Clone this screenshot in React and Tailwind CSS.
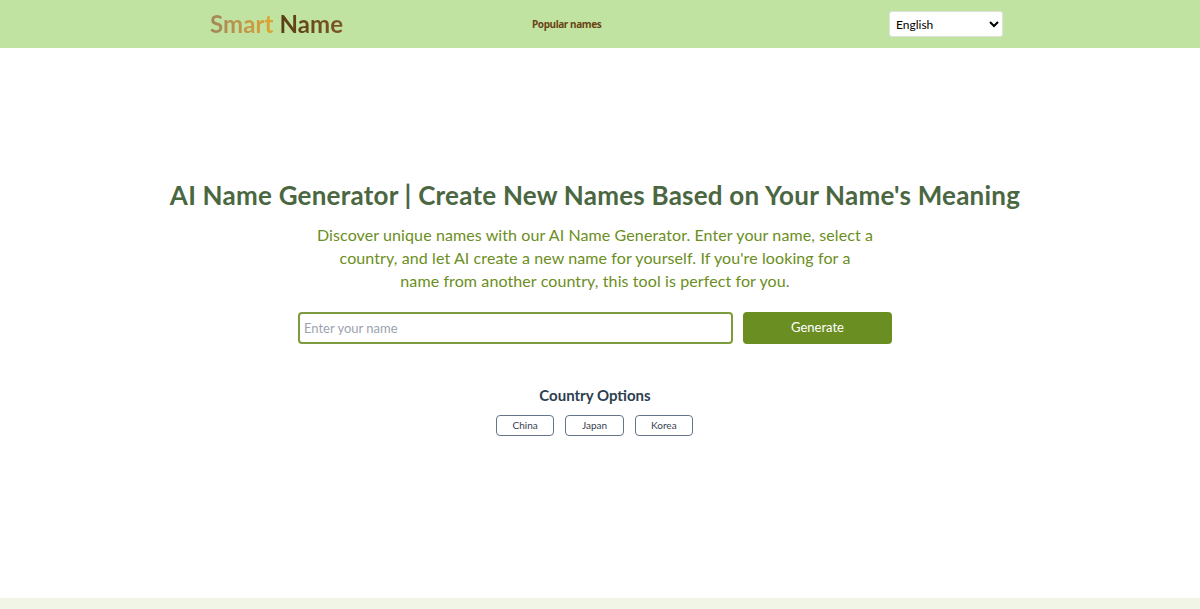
import { useState } from "react";

const countries = ["China", "Japan", "Korea"];

function App() {
  const [name, setName] = useState("");

  return (
    <div className="flex h-[609px] flex-col overflow-hidden bg-white font-['Lato','Noto_Sans',sans-serif]">
      <header className="h-12 bg-[#c1e3a2]">
        <div className="flex h-12 items-center pl-[210px]">
          <a className="w-[322px] text-[24px] leading-none font-bold tracking-[0.1px]">
            <span className="bg-gradient-to-r from-[#a08658] to-[#e0a52c] bg-clip-text text-transparent">Smart</span>{" "}
            <span className="bg-gradient-to-r from-[#5a3d10] to-[#7d5626] bg-clip-text text-transparent">Name</span>
          </a>
          <a className="w-[357px] font-['Noto_Sans',sans-serif] text-[10px] font-bold tracking-[-0.4px] text-[#6b4413]">
            Popular names
          </a>
          <select className="h-[26px] w-[114px] rounded-[3px] border border-[#dfe3da] bg-white pl-[2px] text-xs text-black">
            <option>English</option>
          </select>
        </div>
      </header>

      <main className="flex flex-1 flex-col items-center pt-[129px] pr-[10px]">
        <h1 className="text-[26px] leading-[36px] font-bold tracking-[0.23px] text-[#4a6741]">
          AI Name Generator | Create New Names Based on Your Name's Meaning
        </h1>
        <p className="mt-[10px] w-[576px] text-center text-base leading-[23px] tracking-[0.1px] text-[#6b8e23]">
          Discover unique names with our AI Name Generator. Enter your name, select a
          <br />
          country, and let AI create a new name for yourself. If you're looking for a
          <br />
          name from another country, this tool is perfect for you.
        </p>
        <div className="mt-[20px] flex w-[594px] gap-[10px]">
          <input
            value={name}
            onChange={(e) => setName(e.target.value)}
            placeholder="Enter your name"
            className="h-8 w-[435px] rounded border-2 border-[#7d9c3f] px-[4px] text-[13px] outline-none placeholder:text-[#9ca3af]"
          />
          <button className="h-8 w-[149px] rounded bg-[#6b8e23] text-[13px] text-white">Generate</button>
        </div>
        <h2 className="mt-[39px] text-[15px] leading-[24px] font-bold text-[#2d3f50]">Country Options</h2>
        <div className="mt-2 mr-px flex w-[197px] gap-[11px]">
          {countries.map((country) => (
            <button
              key={country}
              className="h-[21px] flex-1 rounded border border-[#64748b] text-[10px] text-[#374151]"
            >
              {country}
            </button>
          ))}
        </div>
      </main>

      <footer className="h-[11px] bg-[#f0f5e6]" />
    </div>
  );
}

export default App;
